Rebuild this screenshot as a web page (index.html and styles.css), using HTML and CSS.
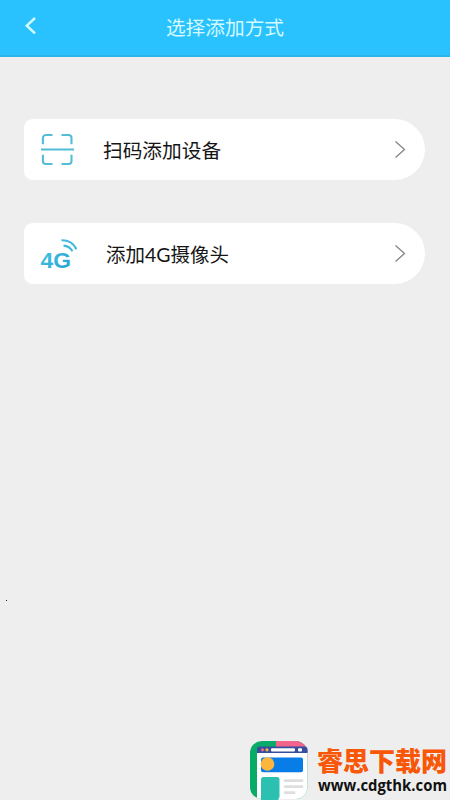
FILE: index.html
```html
<!DOCTYPE html>
<html lang="zh-CN">
<head>
<meta charset="utf-8">
<title>选择添加方式</title>
<link rel="stylesheet" href="styles.css">
</head>
<body>
<div class="screen">
  <header class="bar">
    <svg class="back" width="14" height="20" viewBox="0 0 14 20"><path d="M12 2 3.800 9.700l8.200 7.700"/></svg>
    <h1 class="title">选择添加方式</h1>
  </header>
  <main class="list">
    <a class="card">
      <svg class="icon" width="40" height="40" viewBox="0 0 40 40">
        <path class="scan" d="M5.900 14.300V8a3 3 0 0 1 3-3h6.600M24.500 5h7a3 3 0 0 1 3 3v6.300M5.900 24.700V31a3 3 0 0 0 3 3h6.600M24.500 34h7a3 3 0 0 0 3-3v-6.300M4 19.500h33"/>
      </svg>
      <span class="label">扫码添加设备</span>
      <svg class="arrow" width="12" height="18" viewBox="0 0 12 18"><path d="m1.500 .5 9 8-9 8"/></svg>
    </a>
    <a class="card">
      <svg class="icon" width="40" height="40" viewBox="0 0 40 40">
        <defs><linearGradient id="g" x1="0" y1="0" x2="1" y2="1"><stop offset="0" stop-color="#45c5e0"/><stop offset="1" stop-color="#259ed8"/></linearGradient></defs>
        <text class="fourg" x="3.500" y="34" textLength="30.500" lengthAdjust="spacingAndGlyphs">4G</text>
        <path class="wave" d="M26.500 11.600q6 .4 9 5.700M24.500 6.300q10.500-.3 14.900 8.900"/>
      </svg>
      <span class="label label-wide">添加<span class="latin">4G</span>摄像头</span>
      <svg class="arrow" width="12" height="18" viewBox="0 0 12 18"><path d="m1.500 .5 9 8-9 8"/></svg>
    </a>
  </main>
  <span class="speck"></span>
  <footer class="brand">
    <svg class="logo" width="60" height="60" viewBox="0 0 60 60">
      <defs><clipPath id="c"><rect x="1" y="1" width="57.500" height="58" rx="12"/></clipPath></defs>
      <g clip-path="url(#c)">
        <rect width="60" height="60" fill="#08ab68"/>
        <path d="M27 0h33v18H27z" fill="#f3648c"/>
        <path d="M8 12h52v48H8z" fill="#fff"/>
      </g>
      <path d="M8 13V9.500q0-3 3-3h44q3.500 0 3.500 3V13z" fill="#354e9d"/>
      <circle cx="13.500" cy="9.800" r="1.600" fill="#f3648c"/>
      <circle cx="18" cy="9.800" r="1.600" fill="#fbb63b"/>
      <rect x="22" y="8.300" width="24" height="3.200" rx="1" fill="#fff"/>
      <rect x="49" y="8.300" width="4" height="3.200" rx="1" fill="#fff"/>
      <rect x="12" y="17.500" width="42" height="14.800" rx="2" fill="#087de8"/>
      <circle cx="18.500" cy="24" r="6.800" fill="#fbb63b"/>
      <path d="M12 60V39.500Q12 37 14.500 37h13.500q2.500 0 2.500 2.500V57l-1.500 3z" fill="#2cc0b0"/>
      <path d="M36 40.700h17M36 46.700h17M36 52.700h9" stroke="#dedede" stroke-width="2.800" stroke-linecap="round"/>
    </svg>
    <div class="words">
      <span class="name">睿思下载网</span>
      <svg class="site" width="132" height="24" viewBox="0 0 132 24"><text x="1" y="16" textLength="129" lengthAdjust="spacingAndGlyphs">www.cdgthk.com</text></svg>
    </div>
  </footer>
</div>
</body>
</html>
```
FILE: styles.css
```css
* { box-sizing: border-box; }

body {
  margin: 0;
  background: #eee;
  font-family: "Noto Sans CJK SC", sans-serif;
}

.screen {
  position: relative;
  display: flex;
  flex-direction: column;
  height: 800px;
  overflow: hidden;
}

.bar {
  display: flex;
  align-items: center;
  justify-content: center;
  position: relative;
  height: 57px;
  padding-bottom: 1px;
  background: #29c2ff;
  border-bottom: 2px solid #2cb5ec;
}

.back {
  position: absolute;
  left: 23px;
  top: 16px;
  fill: none;
  stroke: #d4fbff;
  stroke-width: 2.5;
}

.title {
  margin: 0;
  color: #d4f9ff;
  font-size: 19.7px;
  font-weight: 400;
  line-height: 30px;
}

.list {
  display: flex;
  flex-direction: column;
  gap: 43px;
  padding: 62px 25px 0 24px;
}

.card {
  display: flex;
  align-items: center;
  height: 61px;
  padding: 0 19px 0 13px;
  background: #fff;
  border-radius: 9px 31px 31px 9px;
}

.icon { flex: none; }

.scan {
  fill: none;
  stroke: #53bdd5;
  stroke-width: 2.1;
}

.fourg {
  fill: url(#g);
  font: bold 22px "Liberation Sans", sans-serif;
}

.wave {
  fill: none;
  stroke: #3eb9dc;
  stroke-width: 2.1;
}

.label {
  flex: 1;
  margin-left: 26px;
  color: #151515;
  font-size: 19.7px;
  line-height: 30px;
}

.label-wide {
  margin-left: 29px;
  font-size: 19.5px;
}

.latin {
  font-family: Lato, sans-serif;
  line-height: 1;
}

.arrow {
  fill: none;
  stroke: #858585;
  stroke-width: 1.3;
}

.speck {
  position: absolute;
  left: 6px;
  top: 600px;
  width: 1px;
  height: 1px;
  background: #222;
}

.brand {
  display: flex;
  gap: 8px;
  height: 60px;
  margin-top: auto;
  padding-left: 249px;
}

.logo { flex: none; }

.words {
  display: flex;
  flex-direction: column;
  padding-top: 5px;
}

.name {
  color: #f95708;
  font-size: 26px;
  font-weight: 900;
  line-height: 30px;
  white-space: nowrap;
}

.site {
  overflow: visible;
  font: bold 15.5px "Open Sans", sans-serif;
  fill: #111;
}
```
